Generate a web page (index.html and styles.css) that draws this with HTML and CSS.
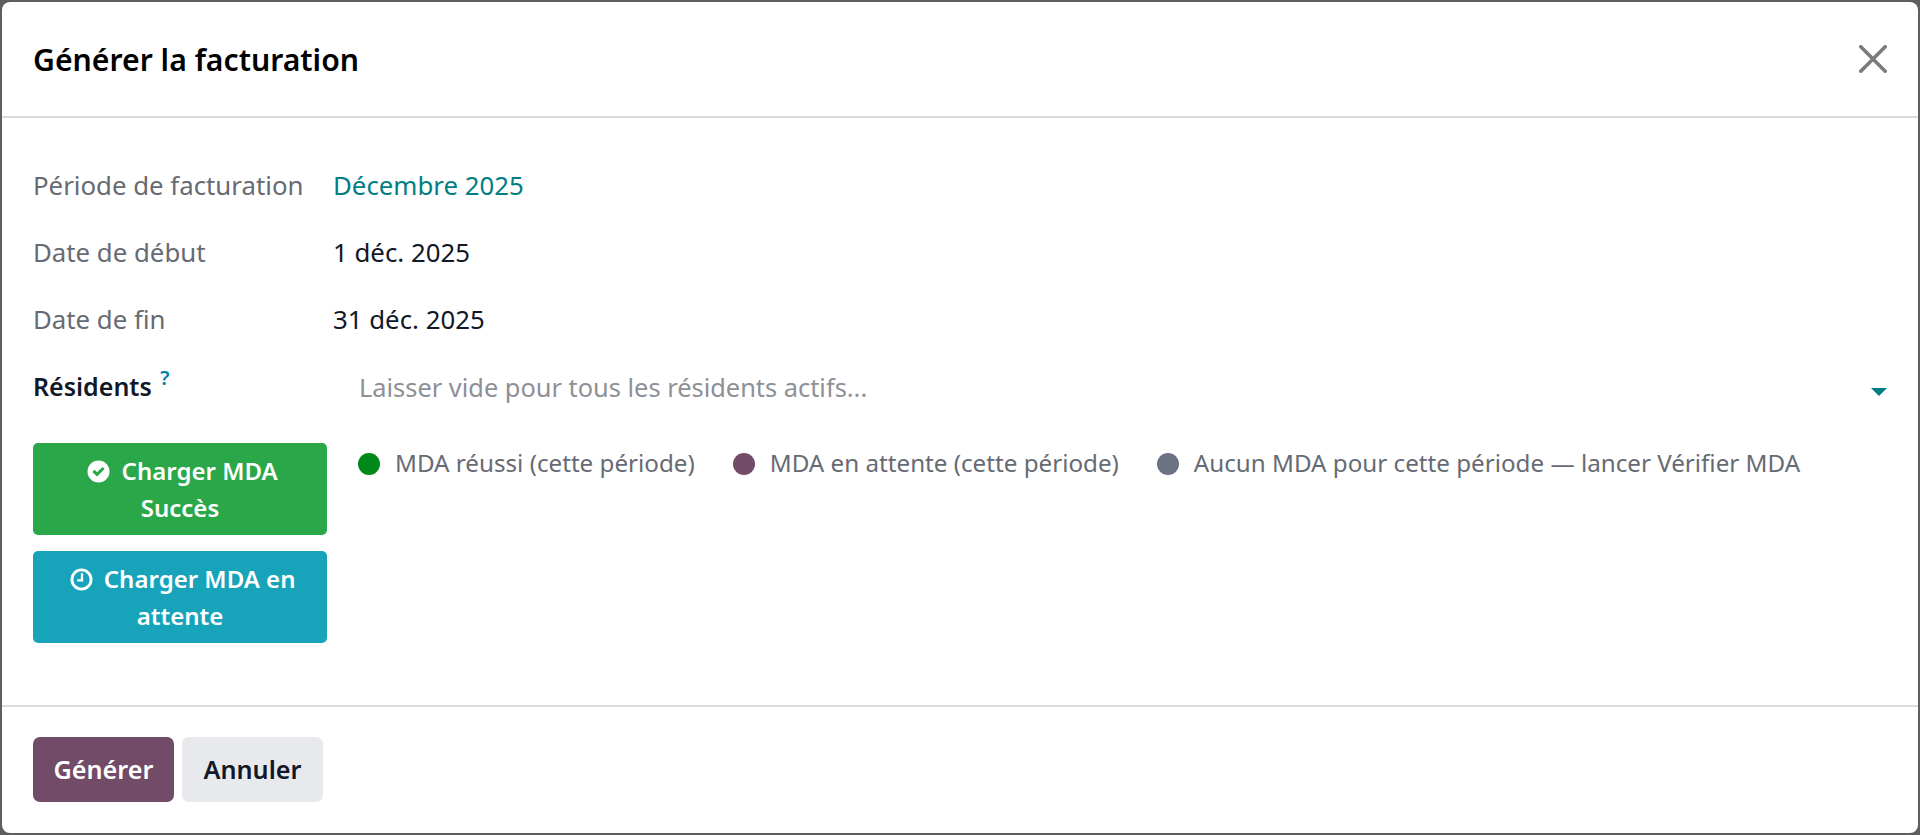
FILE: index.html
```html
<!DOCTYPE html>
<html lang="fr">
<head>
<meta charset="UTF-8">
<meta name="viewport" content="width=device-width, initial-scale=1.0">
<title>Générer la facturation</title>
<link rel="stylesheet" href="styles.css">
</head>
<body>

<div class="modal">
    <header class="modal-header">
        <h1>Générer la facturation</h1>
        <button class="close-button" aria-label="Fermer">
            <svg viewBox="0 0 28 28" width="28" height="28"><path d="M1.8 1.8 L26.2 26.2 M26.2 1.8 L1.8 26.2" stroke="#7b7b7b" stroke-width="3.6" stroke-linecap="round" fill="none"/></svg>
        </button>
    </header>

    <main class="modal-body">
        <div class="field-grid">
            <div class="label">Période de facturation</div>
            <div class="value link">Décembre 2025</div>
            <div class="label">Date de début</div>
            <div class="value">1 déc. 2025</div>
            <div class="label">Date de fin</div>
            <div class="value">31 déc. 2025</div>
            <div class="label strong">Résidents <sup class="help">?</sup></div>
            <div class="value select">
                <span class="placeholder">Laisser vide pour tous les résidents actifs...</span>
                <span class="caret"></span>
            </div>
        </div>

        <div class="status-area">
            <div class="status-buttons">
                <button class="status-button success">
                    <svg class="status-icon" viewBox="0 0 24 24" width="23" height="23"><path fill="#fff" fill-rule="evenodd" d="M12 .5a11.5 11.5 0 1 0 0 23 11.5 11.5 0 0 0 0-23zM5.6 12.4l2.2-2.2 2.7 2.7 5.7-5.7 2.2 2.2-7.9 7.9z"/></svg>
                    Charger MDA Succès
                </button>
                <button class="status-button pending">
                    <svg class="status-icon" viewBox="0 0 24 24" width="23" height="23"><circle cx="12" cy="12" r="10" fill="none" stroke="#fff" stroke-width="3"/><path d="M12.5 5.5 V13 H7.5" fill="none" stroke="#fff" stroke-width="2.4"/></svg>
                    Charger MDA en attente
                </button>
            </div>
            <div class="legend">
                <div class="legend-item"><span class="dot dot-green"></span>MDA réussi (cette période)</div>
                <div class="legend-item"><span class="dot dot-purple"></span>MDA en attente (cette période)</div>
                <div class="legend-item"><span class="dot dot-gray"></span>Aucun MDA pour cette période — lancer Vérifier MDA</div>
            </div>
        </div>
    </main>

    <footer class="modal-footer">
        <button class="footer-button primary">Générer</button>
        <button class="footer-button secondary">Annuler</button>
    </footer>
</div>

</body>
</html>
```

FILE: styles.css
```css
html, body {
    height: 100%;
}
body {
    margin: 0;
    padding: 2px;
    box-sizing: border-box;
    background-color: #5e5e5e;
    color: #111827;
    font-family: "Noto Sans", "Open Sans", sans-serif;
    font-size: 25.8px;
    line-height: 37px;
}
.modal {
    height: 100%;
    display: flex;
    flex-direction: column;
    background-color: #ffffff;
    border-radius: 8px;
    overflow: hidden;
}
.modal-header {
    height: 114px;
    flex: none;
    display: flex;
    align-items: center;
    justify-content: space-between;
    padding: 0 31px 0 31px;
    border-bottom: 2px solid #d9dbde;
}
.modal-header h1 {
    margin: 0;
    font-size: 30.2px;
    font-weight: 600;
    color: #000000;
}
.close-button {
    border: none;
    background: none;
    padding: 0;
    display: flex;
}
.modal-body {
    flex: 1;
    padding: 49px 31px 0;
}
.field-grid {
    display: grid;
    grid-template-columns: 300px 1fr;
    grid-auto-rows: 37px;
    row-gap: 30px;
}
.label {
    color: #666b73;
}
.label.strong {
    color: #111827;
    font-size: 25px;
    font-weight: 600;
}
.help {
    color: #0180a5;
    font-size: 20px;
    line-height: 0;
    vertical-align: 11px;
    margin-left: 2px;
}
.link {
    color: #017e84;
}
.select {
    display: flex;
    align-items: center;
    justify-content: space-between;
    padding: 2px 0 0 26px;
}
.placeholder {
    color: #8d9096;
    font-size: 25.4px;
}
.caret {
    width: 0;
    height: 0;
    border-left: 8px solid transparent;
    border-right: 8px solid transparent;
    border-top: 8px solid #017e84;
    margin-top: 8px;
}
.status-area {
    display: flex;
    margin-top: 38px;
}
.status-buttons {
    width: 294px;
    flex: none;
    display: flex;
    flex-direction: column;
    gap: 16px;
}
.status-button {
    height: 92px;
    padding: 0 20px;
    border: none;
    border-radius: 5px;
    color: #ffffff;
    font: inherit;
    font-size: 24px;
    font-weight: 600;
    text-align: center;
}
.status-icon {
    vertical-align: -3px;
    margin-left: 5px;
    margin-right: 5px;
}
.success {
    background-color: #2aa748;
}
.pending {
    background-color: #17a4bb;
}
.legend {
    display: flex;
    gap: 38px;
    margin-left: 31px;
    padding-top: 1px;
    color: #666b73;
    font-size: 24.2px;
}
.legend-item {
    display: flex;
    align-items: center;
    height: 37px;
}
.dot {
    width: 22px;
    height: 22px;
    border-radius: 50%;
    margin-top: 2px;
    margin-right: 15px;
}
.dot-green {
    background-color: #008818;
}
.dot-purple {
    background-color: #714b67;
}
.dot-gray {
    background-color: #6b7280;
}
.modal-footer {
    flex: none;
    display: flex;
    gap: 8px;
    padding: 30px 31px 31px;
    border-top: 2px solid #d9dbde;
}
.footer-button {
    width: 141px;
    height: 65px;
    border: none;
    border-radius: 7px;
    font: inherit;
    font-size: 25.2px;
    font-weight: 600;
}
.primary {
    background-color: #714b67;
    color: #ffffff;
}
.secondary {
    background-color: #e7e9ed;
    color: #111827;
}
```
